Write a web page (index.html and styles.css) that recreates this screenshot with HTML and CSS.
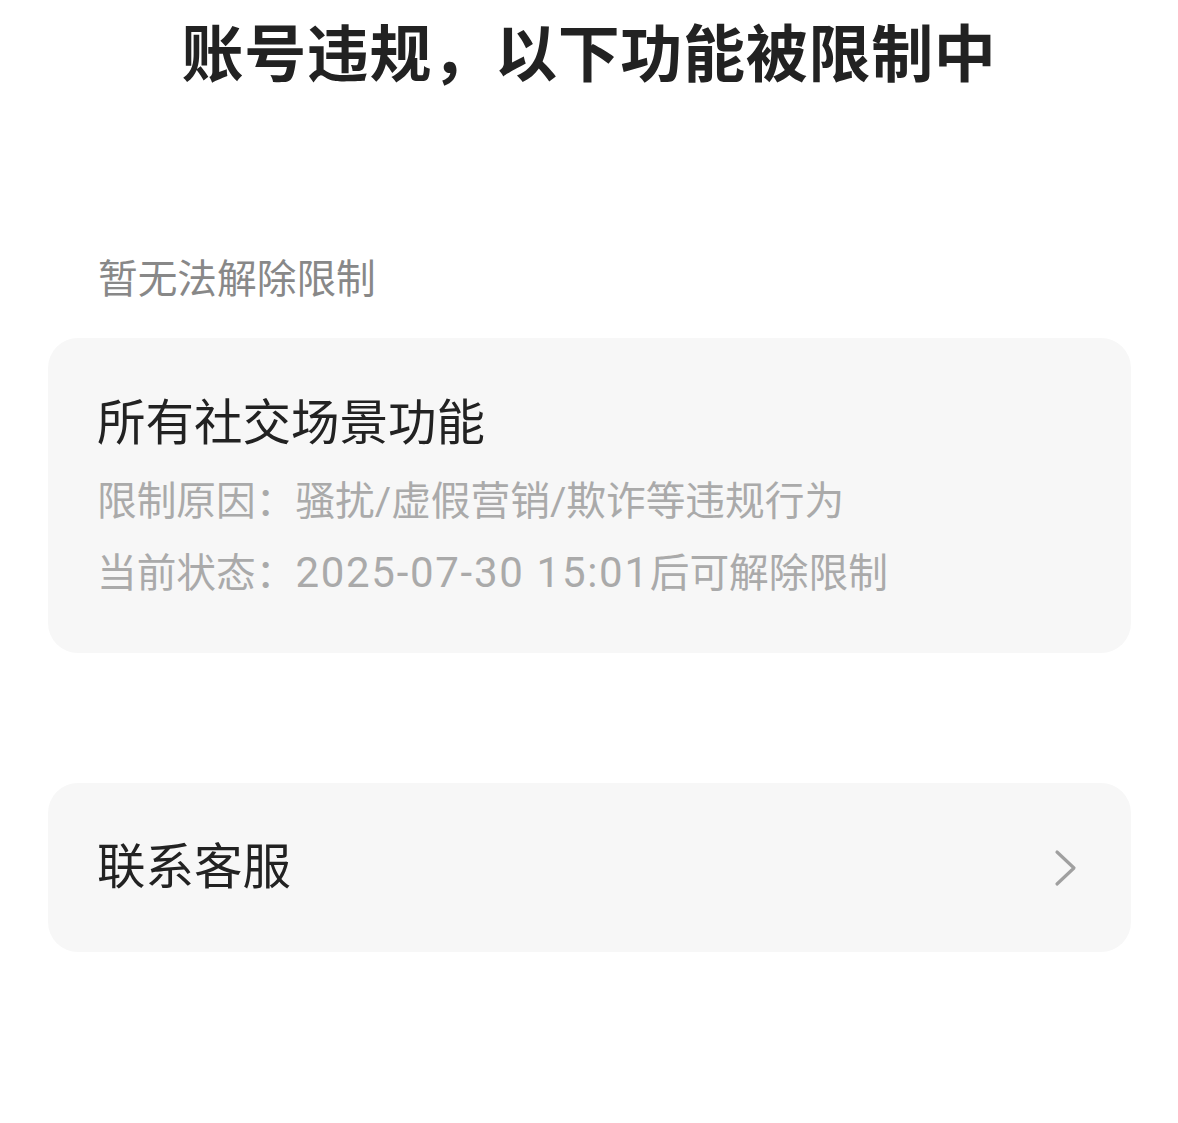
FILE: index.html
```html
<!DOCTYPE html>
<html lang="zh-CN">
<head>
<meta charset="utf-8">
<title>账号违规</title>
<link rel="stylesheet" href="styles.css">
</head>
<body>
<h1 class="title">账号违规，以下功能被限制中</h1>
<div class="section-label">暂无法解除限制</div>
<div class="card">
  <div class="card-title">所有社交场景功能</div>
  <div class="card-line">限制原因：骚扰/虚假营销/欺诈等违规行为</div>
  <div class="card-line">当前状态：<span class="num">2025-07-30 15:01</span>后可解除限制</div>
</div>
<div class="card link-card">
  <span class="link-text">联系客服</span>
  <svg class="chevron" width="26" height="38" viewBox="0 0 26 38" aria-hidden="true">
    <polyline points="4,3 21,19 4,35" fill="none" stroke="#a0a0a0" stroke-width="3.2" stroke-linecap="round" stroke-linejoin="round"/>
  </svg>
</div>
</body>
</html>
```
FILE: styles.css
```css
html, body {
  margin: 0;
  padding: 0;
  background: #ffffff;
}
body {
  font-family: Roboto, "Noto Sans CJK SC", sans-serif;
  width: 1178px;
}
.title {
  margin: 0;
  height: 100px;
  line-height: 100px;
  text-align: center;
  font-family: "Noto Sans CJK SC", sans-serif;
  font-size: 62px;
  font-weight: 700;
  color: #222222;
  letter-spacing: 0.7px;
}
.section-label {
  margin-top: 152px;
  padding-left: 98px;
  height: 56px;
  line-height: 56px;
  font-size: 39.7px;
  color: #888888;
}
.card {
  margin: 30px 47px 0 48px;
  background: #f7f7f7;
  border-radius: 30px;
  padding: 56px 49px 44px 49px;
}
.card-title {
  font-size: 48.5px;
  line-height: 60px;
  color: #222222;
  margin-bottom: 12px;
}
.card-line {
  font-size: 39.7px;
  line-height: 71px;
  color: #aaaaaa;
}
.num {
  font-size: 42px;
  letter-spacing: 1.7px;
}
.link-card {
  margin-top: 130px;
  height: 169px;
  padding: 0 52px 0 49px;
  display: flex;
  align-items: center;
  justify-content: space-between;
  box-sizing: border-box;
}
.link-text {
  font-size: 48.5px;
  line-height: 60px;
  color: #222222;
}
.chevron {
  display: block;
}
```
